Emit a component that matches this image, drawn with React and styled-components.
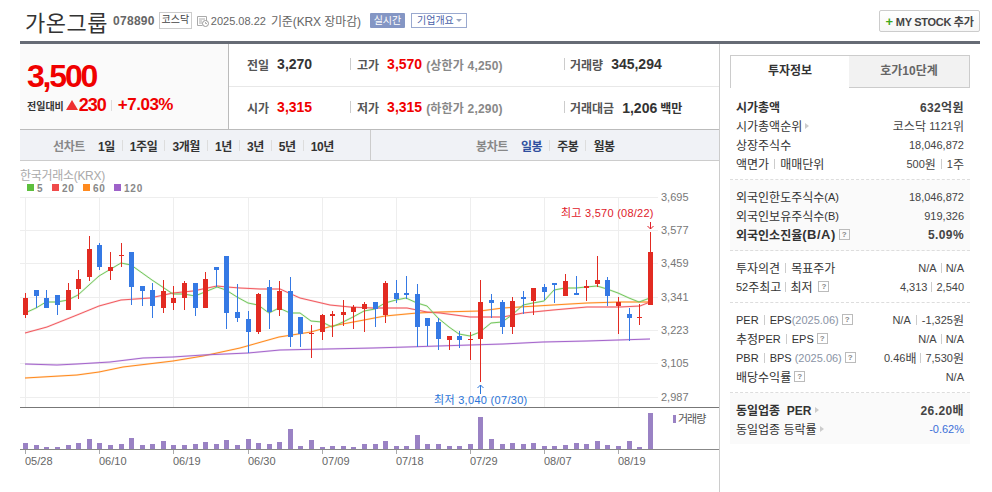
import React from 'react';
import styled, { createGlobalStyle } from 'styled-components';

const FONT = `"Liberation Sans", "Noto Sans CJK KR", sans-serif`;

const GlobalStyle = createGlobalStyle`
  html, body {
    margin: 0;
    padding: 0;
    background: #fff;
  }
  body {
    font-family: ${FONT};
    font-size: 12px;
    color: #333;
  }
`;

const Page = styled.div`
  width: 992px;
  height: 492px;
  overflow: hidden;
  padding: 0 12px 0 20px;
  box-sizing: border-box;
`;

const Header = styled.header`
  height: 41px;
  display: flex;
  align-items: center;
  border-bottom: 3px solid #666b75;
  padding-top: 1px;
  margin-top: -1px;
`;

const Title = styled.h1`
  margin: 0 0 0 5px;
  font-size: 22px;
  font-weight: 400;
  color: #333;
  letter-spacing: 0.5px;
`;

const Code = styled.span`
  margin-left: 5px;
  font-size: 12px;
  font-weight: 700;
  letter-spacing: 0.3px;
  color: #666;
`;

const MarketBadge = styled.span`
  margin-left: 4px;
  height: 15px;
  width: 31px;
  border: 1px solid #ccc;
  font-size: 10px;
  line-height: 14px;
  text-align: center;
  color: #444;
`;

const DateIcon = styled.svg`
  margin-left: 5px;
  width: 12px;
  height: 12px;
`;

const DateText = styled.span`
  margin-left: 2px;
  font-size: 11px;
  color: #666;
`;

const BasisText = styled.span`
  margin-left: 5px;
  font-size: 12px;
  letter-spacing: -0.1px;
  color: #666;
`;

const LiveBadge = styled.span`
  margin-left: 9px;
  width: 35px;
  height: 15px;
  border-radius: 1px;
  background: #8496c4;
  color: #fff;
  font-size: 10px;
  line-height: 15px;
  text-align: center;
`;

const OverviewButton = styled.span`
  margin-left: 6px;
  height: 13px;
  padding: 0 4px 0 5px;
  border: 1px solid #9aa9cf;
  color: #4a62a8;
  font-size: 10px;
  line-height: 13px;
  display: flex;
  align-items: center;
  gap: 2px;
  &::after {
    content: '';
    border: 3px solid transparent;
    border-top: 3px solid #9aa5c0;
    border-bottom: 0;
  }
`;

const MyStockButton = styled.button`
  margin-left: auto;
  width: 101px;
  height: 22px;
  padding: 0;
  border: 1px solid #ccc;
  border-radius: 2px;
  background: linear-gradient(#fff, #f6f6f6);
  font-family: ${FONT};
  font-size: 11px;
  font-weight: 700;
  letter-spacing: -0.3px;
  color: #444;
  &::before {
    content: '+';
    color: #3fa81c;
    font-size: 13px;
    margin-right: 3px;
  }
`;

const Main = styled.main`
  display: flex;
  height: 448px;
`;

const LeftColumn = styled.section`
  width: 699px;
  border-right: 1px solid #ccc;
`;

const Summary = styled.div`
  display: flex;
  height: 85px;
  border-bottom: 1px solid #bbb;
`;

const PricePanel = styled.div`
  width: 201px;
  background: #fafafa;
  border-right: 1px solid #bbb;
  padding: 17px 0 0 7px;
`;

const Price = styled.div`
  font-size: 32px;
  line-height: 30px;
  font-weight: 700;
  color: #f00000;
  letter-spacing: -2.2px;
`;

const Change = styled.div`
  display: flex;
  align-items: center;
  margin-top: 2px;
  height: 24px;
`;

const ChangeLabel = styled.span`
  font-size: 10px;
  font-weight: 700;
  color: #333;
  margin-right: 2px;
`;

const UpTriangle = styled.span`
  width: 0;
  height: 0;
  border-left: 6.5px solid transparent;
  border-right: 6.5px solid transparent;
  border-bottom: 10px solid #ee3030;
`;

const ChangeAmount = styled.span`
  font-size: 18px;
  font-weight: 700;
  color: #f00000;
  letter-spacing: -1px;
  margin-left: 1px;
`;

const ChangeRate = styled.span`
  font-size: 17px;
  font-weight: 700;
  color: #f00000;
  letter-spacing: -0.5px;
`;

const Divider = styled.span`
  width: 1px;
  height: 11px;
  background: #ddd;
  margin: ${(props) => props.$margin || '0 7px'};
  flex: none;
`;

const Stats = styled.div`
  flex: 1;
`;

const StatRow = styled.div`
  display: grid;
  grid-template-columns: 121px 214px 1fr;
  height: 42px;
  border-bottom: ${(props) => (props.$first ? '1px solid #e8e8e8' : 'none')};
`;

const StatCell = styled.div`
  display: flex;
  align-items: center;
  gap: 8px;
  padding-bottom: 2px;
  padding-left: ${(props) => (props.$first ? '18px' : '0')};
`;

const CellBar = styled.span`
  width: 1px;
  height: 12px;
  background: #ccc;
  margin-right: ${(props) => (props.$tight ? '-3px' : '-2px')};
`;

const StatLabel = styled.span`
  font-size: 12px;
  font-weight: 700;
  color: #555;
`;

const StatValue = styled.span`
  font-size: 14px;
  font-weight: 700;
  color: ${(props) => (props.$up ? '#f00000' : '#333')};
`;

const StatUnit = styled.span`
  font-size: 12px;
  font-weight: 700;
  color: #333;
  margin-left: 3px;
`;

const StatNote = styled.span`
  font-size: 12px;
  font-weight: 700;
  color: #888;
  margin-left: -4px;
  letter-spacing: 0.2px;
`;

const Toolbar = styled.div`
  display: flex;
  height: 30px;
  background: #f0f2f6;
  border-bottom: 1px solid #ccc;
`;

const ToolGroup = styled.div`
  display: flex;
  align-items: center;
  box-sizing: border-box;
  letter-spacing: -0.4px;
  width: ${(props) => (props.$left ? '351px' : 'auto')};
  padding-left: ${(props) => (props.$left ? '33px' : '105px')};
  border-right: ${(props) => (props.$left ? '1px solid #ccc' : 'none')};
`;

const ToolLabel = styled.span`
  font-weight: 700;
  color: #888;
  margin-right: 13px;
`;

const ToolItem = styled.span`
  font-weight: 700;
  color: ${(props) => (props.$active ? '#2f4f9f' : '#333')};
`;

const ChartSvg = styled.svg`
  display: block;
  width: 699px;
  height: 331px;
`;

const AxisText = styled.text`
  font-family: ${FONT};
  font-size: 11px;
  fill: ${(props) => props.$fill || '#777'};
  letter-spacing: ${(props) => props.$spacing || '0'};
`;

const ExchangeText = styled(AxisText)`
  font-size: 12px;
  fill: #aaa;
  letter-spacing: -0.3px;
`;

const LegendText = styled(AxisText)`
  font-size: 10px;
  font-weight: 700;
  fill: #888;
  letter-spacing: 0.8px;
`;

const RightColumn = styled.aside`
  width: 240px;
  margin-left: 10px;
  padding-top: 11px;
`;

const Tabs = styled.div`
  display: flex;
  height: 33px;
`;

const Tab = styled.div`
  box-sizing: border-box;
  text-align: center;
  font-weight: 700;
  line-height: 31px;
  border: 1px solid #ccc;
  background: ${(props) => (props.$active ? '#fff' : '#f2f2f2')};
  color: ${(props) => (props.$active ? '#333' : '#666')};
  border-bottom: ${(props) => (props.$active ? 'none' : '1px solid #ccc')};
  border-left: ${(props) => (props.$active ? '1px solid #ccc' : 'none')};
  margin-left: ${(props) => (props.$active ? '0' : '-1px')};
  width: ${(props) => (props.$active ? '120px' : '121px')};
`;

const InfoSection = styled.div`
  padding: ${(props) => (props.$first ? '9px' : '7px')} 6px 6px;
  background: ${(props) => (props.$shade ? '#fafafa' : '#fff')};
  border-bottom: ${(props) => (props.$last ? 'none' : '1px dashed #ddd')};
`;

const InfoRow = styled.div`
  display: flex;
  align-items: center;
  justify-content: space-between;
  height: 19px;
  white-space: nowrap;
`;

const InfoLabel = styled.div`
  display: flex;
  align-items: center;
  font-size: 12px;
  font-weight: ${(props) => (props.$bold ? 700 : 400)};
  color: #333;
`;

const Latin = styled.span`
  font-size: ${(props) => (props.$wide ? '13px' : '11px')};
  letter-spacing: ${(props) => (props.$wide ? '0.5px' : '0')};
`;

const InfoValue = styled.div`
  display: flex;
  align-items: center;
  font-size: ${(props) => (props.$bold ? '12px' : '11px')};
  letter-spacing: ${(props) => (props.$bold ? '0.4px' : '0')};
  font-weight: ${(props) => (props.$bold ? 700 : 400)};
  color: ${(props) => (props.$down ? '#3b6fd8' : '#444')};
`;

const Unit = styled.span`
  font-size: 12px;
`;

const Muted = styled.span`
  font-size: 11px;
  color: #8a93a5;
`;

const Help = styled.span`
  width: 9px;
  height: 9px;
  border: 1px solid #bbb;
  margin-left: ${(props) => props.$gap || 3}px;
  font-size: 8px;
  font-weight: 700;
  line-height: 9px;
  text-align: center;
  color: #888;
`;

const Caret = styled.span`
  margin-left: 3px;
  border-left: 4px solid #ccc;
  border-top: 3px solid transparent;
  border-bottom: 3px solid transparent;
`;

const Bar = styled.span`
  width: 1px;
  height: 10px;
  background: #ccc;
  margin: 0 ${(props) => props.$space || 5}px;
`;

// x, body top, body bottom, wick top, wick bottom, color
const R = '#e22b22';
const B = '#3579e4';
const candles = [
  [25, 298, 315, 293, 318, R], [36, 290, 296, 290, 308, B], [46, 298, 308, 290, 308, B],
  [57, 295, 305, 295, 315, B], [68, 290, 310, 283, 310, R], [78, 279, 289, 270, 299, R],
  [89, 249, 277, 236, 281, R], [99, 245, 267, 243, 270, B], [110, 267, 271, 252, 280, R],
  [121, 255, 256, 243, 267, R], [131, 252, 287, 252, 305, B], [142, 286, 291, 286, 306, B],
  [152, 290, 306, 283, 318, B], [163, 291, 308, 280, 313, R], [173, 298, 303, 286, 310, R],
  [184, 283, 298, 281, 310, R], [195, 283, 308, 283, 316, B], [205, 279, 308, 272, 308, R],
  [216, 267, 270, 267, 287, B], [226, 256, 313, 256, 329, B], [237, 312, 318, 284, 322, B],
  [248, 319, 332, 311, 353, B], [258, 294, 332, 293, 334, R], [269, 287, 312, 280, 329, B],
  [279, 291, 310, 281, 316, R], [290, 291, 337, 277, 347, B], [300, 317, 334, 317, 347, B],
  [311, 333, 334, 325, 358, R], [322, 315, 332, 314, 340, R], [332, 314, 316, 311, 337, R],
  [343, 312, 315, 300, 326, R], [353, 307, 312, 305, 329, R], [364, 304, 309, 302, 332, R],
  [375, 302, 309, 302, 327, B], [385, 283, 315, 281, 323, R], [396, 293, 299, 280, 303, B],
  [406, 293, 295, 276, 299, B], [417, 294, 327, 284, 347, B], [427, 318, 326, 318, 346, B],
  [438, 322, 339, 318, 350, B], [449, 336, 340, 336, 350, R], [459, 336, 340, 331, 348, B],
  [470, 339, 340, 332, 360, R], [480, 302, 339, 280, 382, R], [491, 300, 303, 294, 318, B],
  [502, 302, 327, 300, 334, B], [512, 301, 327, 297, 334, R], [523, 297, 299, 291, 314, B],
  [533, 288, 301, 288, 315, R], [544, 287, 292, 284, 300, B], [554, 283, 285, 283, 303, B],
  [565, 281, 296, 274, 296, R], [576, 293, 295, 276, 295, B], [586, 286, 288, 280, 301, R],
  [597, 280, 284, 256, 287, R], [607, 280, 296, 277, 306, B], [618, 302, 306, 297, 334, R],
  [629, 314, 318, 308, 341, B], [639, 317, 318, 304, 325, R], [650, 252, 305, 232, 305, R],
];

const volumes = [
  6, 4, 2, 2, 4, 6, 10, 6, 4, 5, 11, 4, 5, 8, 4, 4, 5, 7, 5, 9, 4, 10, 6, 5, 7, 20, 3, 9, 2, 3,
  3, 2, 5, 5, 8, 3, 3, 14, 5, 5, 3, 3, 5, 32, 10, 5, 6, 5, 6, 3, 3, 4, 6, 5, 8, 4, 3, 8, 2, 36,
];

const maLines = [
  {
    color: '#ff8a1e',
    points:
      '25,378 77,375 99,372 123,367 173,361 203,356 240,348 279,337 311,332 332,326 364,320 385,316 417,313 440,312 480,311 503,308 553,305 587,303 620,302 650,302',
  },
  {
    color: '#a566cc',
    points:
      '25,364 57,365 77,364 110,362 143,358 173,357 203,355 248,353 280,350 373,348 407,347 470,345 503,344 543,342 587,341 650,339',
  },
  {
    color: '#f25b60',
    points:
      '25,333 47,327 57,323 77,315 99,306 121,300 150,298 173,293 193,291 217,286 227,287 240,288 260,289 280,289 300,298 330,305 350,307 373,308 407,308 427,312 440,313 470,317 503,317 523,313 553,310 587,307 620,307 640,306 650,302',
  },
  {
    color: '#76c75f',
    points:
      '25,313 36,308 46,302 57,302 68,300 78,295 89,285 99,276 121,263 131,265 152,280 173,294 184,294 195,296 217,287 226,290 237,297 248,303 258,305 269,313 279,308 290,313 300,313 311,321 322,322 332,327 343,322 353,317 364,311 375,309 385,303 396,300 406,298 417,303 427,306 438,318 449,327 459,334 470,336 480,332 491,323 502,322 512,315 523,305 533,303 544,301 554,290 565,288 576,288 586,287 597,286 607,289 618,293 629,298 639,302 650,298',
  },
];

const gridX = [25, 99, 173, 248, 322, 396, 470, 544, 618];
const gridY = [197, 230, 263, 297, 330, 363, 397];
const priceLabels = ['3,695', '3,577', '3,459', '3,341', '3,223', '3,105', '2,987'];
const dateLabels = ['05/28', '06/10', '06/19', '06/30', '07/09', '07/18', '07/29', '08/07', '08/19'];
const legend = [
  { x: 27, color: '#5dbf3d', label: '5' },
  { x: 52, color: '#f04a4a', label: '20' },
  { x: 83, color: '#ff8a1e', label: '60' },
  { x: 114, color: '#9e62c9', label: '120' },
];

function StockChart() {
  return (
    <ChartSvg viewBox="20 161 699 331">
      <ExchangeText x="20" y="180">한국거래소(KRX)</ExchangeText>
      {legend.map((item) => (
        <g key={item.label}>
          <rect x={item.x} y="184" width="7" height="7" fill={item.color} />
          <LegendText x={item.x + 10} y="192">{item.label}</LegendText>
        </g>
      ))}

      <g shapeRendering="crispEdges" stroke="#eee">
        {gridY.map((y) => <line key={y} x1="20" x2="658" y1={y} y2={y} />)}
        {gridX.map((x) => <line key={x} x1={x + 0.5} x2={x + 0.5} y1="197" y2="407" />)}
      </g>

      {maLines.map((ma) => (
        <g key={ma.color} fill="none" stroke={ma.color}>
          <polyline points={ma.points} strokeWidth="2" opacity="0.2" />
          <polyline points={ma.points} strokeWidth="1" />
        </g>
      ))}

      <g shapeRendering="crispEdges">
        {candles.map(([x, top, bottom, high, low, color]) => (
          <g key={x} fill={color}>
            <rect x={x} y={high} width="1" height={low - high} />
            <rect x={x - 2} y={top} width="5" height={bottom - top} />
          </g>
        ))}
      </g>

      {priceLabels.map((label, i) => (
        <AxisText key={label} x="661" y={gridY[i] + 4}>{label}</AxisText>
      ))}

      <AxisText x="561" y="217" $fill="#e0202a" $spacing="0.25px">최고 3,570 (08/22)</AxisText>
      <path d="M650.5 222v7M647.5 226l3 3 3-3" fill="none" stroke="#e0202a" />
      <AxisText x="434" y="404" $fill="#2a74d8" $spacing="0.3px">최저 3,040 (07/30)</AxisText>
      <path d="M480.5 394v-9M477.5 388l3-3 3 3" fill="none" stroke="#2a74d8" />

      <line x1="20" x2="719" y1="407.5" y2="407.5" stroke="#777" />

      {candles.map(([x], i) => (
        <rect key={x} x={x - 2} y={449 - volumes[i]} width="5" height={volumes[i]} fill="#9a82c4" shapeRendering="crispEdges" />
      ))}
      <line x1="20" x2="719" y1="449.5" y2="449.5" stroke="#888" />
      {gridX.map((x, i) => (
        <g key={x}>
          <line x1={x + 0.5} x2={x + 0.5} y1="450" y2="454" stroke="#aaa" />
          <AxisText x={x} y="465" $fill="#666">{dateLabels[i]}</AxisText>
        </g>
      ))}
      <rect x="673" y="415" width="3" height="8" fill="#9a82c4" />
      <AxisText x="678" y="423" $fill="#555" $spacing="-1px">거래량</AxisText>
    </ChartSvg>
  );
}

function ToolList({ items, active }) {
  return items.map((item, i) => (
    <React.Fragment key={item}>
      {i > 0 && <Divider />}
      <ToolItem $active={item === active}>{item}</ToolItem>
    </React.Fragment>
  ));
}

function App() {
  return (
    <>
      <GlobalStyle />
      <Page>
        <Header>
          <Title>가온그룹</Title>
          <Code>078890</Code>
          <MarketBadge>코스닥</MarketBadge>
          <DateIcon viewBox="0 0 12 12">
            <path d="M.5 1.5h9v5M.5 1.5v9h5M2 4h6M2 6h3M2 8h3" fill="none" stroke="#aaa" />
            <circle cx="8.5" cy="8.5" r="3" fill="#fff" stroke="#999" />
            <path d="M8.5 7v1.5h1.5" fill="none" stroke="#999" strokeWidth="0.8" />
          </DateIcon>
          <DateText>2025.08.22</DateText>
          <BasisText>기준(KRX 장마감)</BasisText>
          <LiveBadge>실시간</LiveBadge>
          <OverviewButton>기업개요</OverviewButton>
          <MyStockButton>MY STOCK 추가</MyStockButton>
        </Header>
        <Main>
          <LeftColumn>
            <Summary>
              <PricePanel>
                <Price>3,500</Price>
                <Change>
                  <ChangeLabel>전일대비</ChangeLabel>
                  <UpTriangle />
                  <ChangeAmount>230</ChangeAmount>
                  <Divider $margin="0 6px 0 5px" />
                  <ChangeRate>+7.03%</ChangeRate>
                </Change>
              </PricePanel>
              <Stats>
                <StatRow $first>
                  <StatCell $first>
                    <StatLabel>전일</StatLabel>
                    <StatValue>3,270</StatValue>
                  </StatCell>
                  <StatCell>
                    <CellBar />
                    <StatLabel>고가</StatLabel>
                    <StatValue $up>3,570</StatValue>
                    <StatNote>(상한가 4,250)</StatNote>
                  </StatCell>
                  <StatCell>
                    <CellBar $tight />
                    <StatLabel>거래량</StatLabel>
                    <StatValue>345,294</StatValue>
                  </StatCell>
                </StatRow>
                <StatRow>
                  <StatCell $first>
                    <StatLabel>시가</StatLabel>
                    <StatValue $up>3,315</StatValue>
                  </StatCell>
                  <StatCell>
                    <CellBar />
                    <StatLabel>저가</StatLabel>
                    <StatValue $up>3,315</StatValue>
                    <StatNote>(하한가 2,290)</StatNote>
                  </StatCell>
                  <StatCell>
                    <CellBar $tight />
                    <StatLabel>거래대금</StatLabel>
                    <StatValue>
                      1,206<StatUnit>백만</StatUnit>
                    </StatValue>
                  </StatCell>
                </StatRow>
              </Stats>
            </Summary>
            <Toolbar>
              <ToolGroup $left>
                <ToolLabel>선차트</ToolLabel>
                <ToolList items={['1일', '1주일', '3개월', '1년', '3년', '5년', '10년']} />
              </ToolGroup>
              <ToolGroup>
                <ToolLabel>봉차트</ToolLabel>
                <ToolList items={['일봉', '주봉', '월봉']} active="일봉" />
              </ToolGroup>
            </Toolbar>
            <StockChart />
          </LeftColumn>
          <RightColumn>
            <Tabs>
              <Tab $active>투자정보</Tab>
              <Tab>호가10단계</Tab>
            </Tabs>
            <InfoSection $first>
              <InfoRow>
                <InfoLabel $bold>시가총액</InfoLabel>
                <InfoValue $bold>632억원</InfoValue>
              </InfoRow>
              <InfoRow>
                <InfoLabel>시가총액순위<Caret /></InfoLabel>
                <InfoValue><Unit>코스닥&nbsp;</Unit>1121<Unit>위</Unit></InfoValue>
              </InfoRow>
              <InfoRow>
                <InfoLabel>상장주식수</InfoLabel>
                <InfoValue>18,046,872</InfoValue>
              </InfoRow>
              <InfoRow>
                <InfoLabel>액면가<Bar />매매단위</InfoLabel>
                <InfoValue>500<Unit>원</Unit><Bar />1<Unit>주</Unit></InfoValue>
              </InfoRow>
            </InfoSection>
            <InfoSection $shade>
              <InfoRow>
                <InfoLabel>외국인한도주식수<Latin>(A)</Latin></InfoLabel>
                <InfoValue>18,046,872</InfoValue>
              </InfoRow>
              <InfoRow>
                <InfoLabel>외국인보유주식수<Latin>(B)</Latin></InfoLabel>
                <InfoValue>919,326</InfoValue>
              </InfoRow>
              <InfoRow>
                <InfoLabel $bold>외국인소진율<Latin $wide>(B/A)</Latin><Help>?</Help></InfoLabel>
                <InfoValue $bold>5.09%</InfoValue>
              </InfoRow>
            </InfoSection>
            <InfoSection>
              <InfoRow>
                <InfoLabel>투자의견<Bar />목표주가</InfoLabel>
                <InfoValue>N/A<Bar $space={4} />N/A</InfoValue>
              </InfoRow>
              <InfoRow>
                <InfoLabel><Latin>52</Latin>주최고<Bar $space={4} />최저<Help $gap={6}>?</Help></InfoLabel>
                <InfoValue>4,313<Bar $space={4} />2,540</InfoValue>
              </InfoRow>
            </InfoSection>
            <InfoSection>
              <InfoRow>
                <InfoLabel><Latin>PER</Latin><Bar /><Latin>EPS</Latin><Muted>(2025.06)</Muted><Help>?</Help></InfoLabel>
                <InfoValue>N/A<Bar />-1,325<Unit>원</Unit></InfoValue>
              </InfoRow>
              <InfoRow>
                <InfoLabel>추정<Latin>PER</Latin><Bar /><Latin>EPS</Latin><Help>?</Help></InfoLabel>
                <InfoValue>N/A<Bar $space={4} />N/A</InfoValue>
              </InfoRow>
              <InfoRow>
                <InfoLabel><Latin>PBR</Latin><Bar /><Latin>BPS</Latin><Muted>&nbsp;(2025.06)</Muted><Help>?</Help></InfoLabel>
                <InfoValue>0.46<Unit>배</Unit><Bar $space={4} />7,530<Unit>원</Unit></InfoValue>
              </InfoRow>
              <InfoRow>
                <InfoLabel>배당수익률<Help>?</Help></InfoLabel>
                <InfoValue>N/A</InfoValue>
              </InfoRow>
            </InfoSection>
            <InfoSection $shade $last>
              <InfoRow>
                <InfoLabel $bold>동일업종&nbsp;&nbsp;PER<Caret /></InfoLabel>
                <InfoValue $bold>26.20배</InfoValue>
              </InfoRow>
              <InfoRow>
                <InfoLabel>동일업종 등락률<Caret /></InfoLabel>
                <InfoValue $down>-0.62%</InfoValue>
              </InfoRow>
            </InfoSection>
          </RightColumn>
        </Main>
      </Page>
    </>
  );
}

export default App;
